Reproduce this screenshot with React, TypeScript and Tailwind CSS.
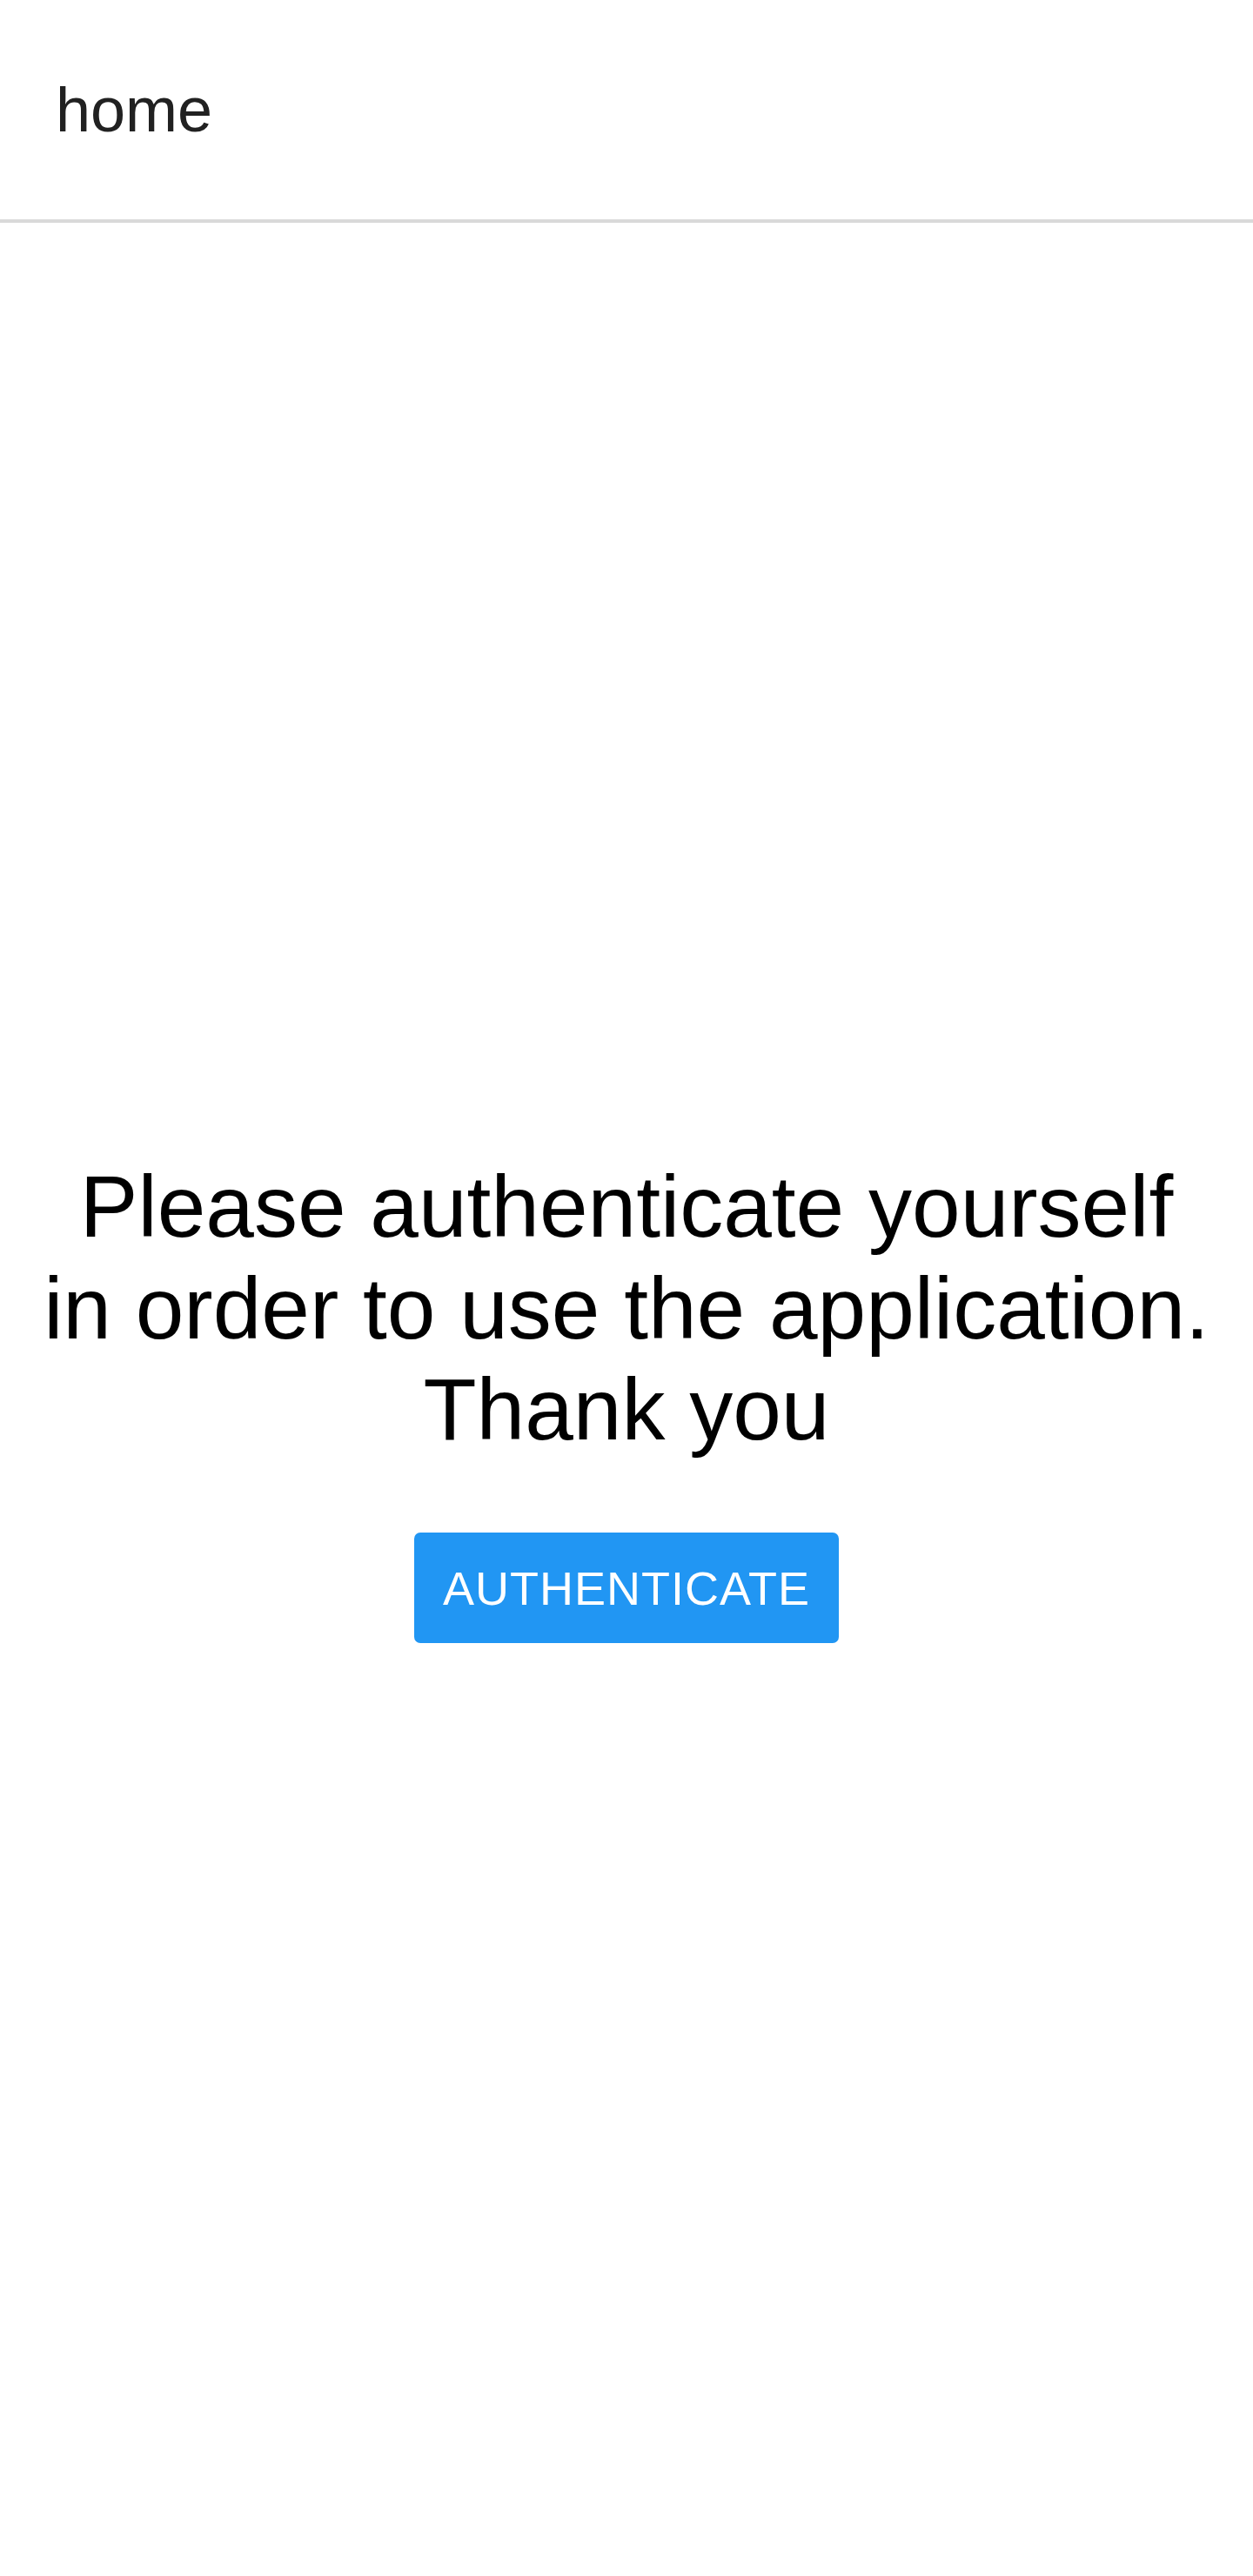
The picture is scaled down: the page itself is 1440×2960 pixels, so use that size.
export default function App() {
  return (
    <div className="flex min-h-screen flex-col bg-white font-['Liberation_Sans',Arial,sans-serif]">
      <header className="flex h-[256px] shrink-0 items-center border-b-4 border-[#d9d9d9] pl-[64px]">
        <span className="text-[72px] leading-none text-[#212121]">home</span>
      </header>
      <main className="flex flex-1 flex-col items-center justify-center px-[48px]">
        <h1 className="text-center text-[100px] font-normal leading-[1.167] text-black">
          Please authenticate yourself in order to use the application. Thank you
        </h1>
        <button className="mt-[83px] flex h-[127px] w-[488px] items-center justify-center rounded-[7px] bg-[#2196f3] text-[54px] uppercase leading-none tracking-[1px] text-white">
          Authenticate
        </button>
      </main>
    </div>
  );
}
